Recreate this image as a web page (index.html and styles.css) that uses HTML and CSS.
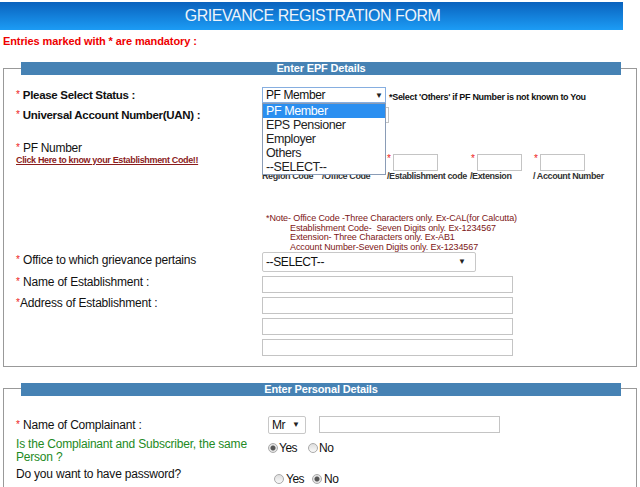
FILE: index.html
```html
<!DOCTYPE html>
<html>
<head>
<meta name="viewport" content="width=device-width, initial-scale=1">
<link rel="stylesheet" href="styles.css">
</head>
<body>
  <div class="page-title">GRIEVANCE REGISTRATION FORM</div>
  <p class="mandatory">Entries marked with * are mandatory :</p>

  <!-- EPF details -->
  <div class="panel">
    <div class="panel-title">Enter EPF Details</div>

    <div class="row row-status">
      <div class="label strong"><span class="req">*</span> Please Select Status :</div>
      <div class="field">
        <div class="select select-status">
          <span>PF Member</span><span class="arrow">&#9660;</span>
          <ul class="options">
            <li class="active">PF Member</li>
            <li>EPS Pensioner</li>
            <li>Employer</li>
            <li>Others</li>
            <li>--SELECT--</li>
          </ul>
        </div>
        <span class="hint">*Select 'Others' if PF Number is not known to You</span>
      </div>
    </div>

    <div class="row row-uan">
      <div class="label strong"><span class="req">*</span> Universal Account Number(UAN) :</div>
      <div class="field">
        <div class="input input-uan"></div>
      </div>
    </div>

    <div class="row row-pf">
      <div class="label">
        <div class="pf-title"><span class="req">*</span> PF Number</div>
        <a href="#" class="code-link">Click Here to know your Establishment Code!!</a>
      </div>
      <div class="pf-grid">
        <div class="pf-part">
          <div class="pf-box"><span class="req"></span><span class="input input-code"></span></div>
          <div class="pf-caption">Region Code</div>
        </div>
        <div class="pf-part">
          <div class="pf-box"><span class="req"></span><span class="input input-code"></span></div>
          <div class="pf-caption">/Office Code</div>
        </div>
        <div class="pf-part">
          <div class="pf-box"><span class="req">*</span><span class="input input-code"></span></div>
          <div class="pf-caption">/Establishment code</div>
        </div>
        <div class="pf-part">
          <div class="pf-box"><span class="req">*</span><span class="input input-code"></span></div>
          <div class="pf-caption">/Extension</div>
        </div>
        <div class="pf-part">
          <div class="pf-box"><span class="req">*</span><span class="input input-code"></span></div>
          <div class="pf-caption">/ Account Number</div>
        </div>
      </div>
    </div>

    <div class="note">
      <div>*Note- Office Code -Three Characters only. Ex-CAL(for Calcutta)</div>
      <div class="indent">Establishment Code-&nbsp; Seven Digits only. Ex-1234567</div>
      <div class="indent">Extension- Three Characters only. Ex-AB1</div>
      <div class="indent">Account Number-Seven Digits only. Ex-1234567</div>
    </div>

    <div class="row row-office">
      <div class="label"><span class="req">*</span> Office to which grievance pertains</div>
      <div class="field">
        <div class="select select-office"><span>--SELECT--</span><span class="arrow">&#9660;</span></div>
      </div>
    </div>

    <div class="row row-text">
      <div class="label"><span class="req">*</span> Name of Establishment :</div>
      <div class="field">
        <div class="input input-wide"></div>
      </div>
    </div>

    <div class="row row-text">
      <div class="label"><span class="req">*</span>Address of Establishment :</div>
      <div class="field stack">
        <div class="input input-wide"></div>
        <div class="input input-wide"></div>
        <div class="input input-wide"></div>
      </div>
    </div>
  </div>

  <!-- personal details -->
  <div class="panel panel-personal">
    <div class="panel-title">Enter Personal Details</div>

    <div class="row row-complainant">
      <div class="label"><span class="req">*</span> Name of Complainant :</div>
      <div class="field">
        <div class="select select-title"><span>Mr</span><span class="arrow">&#9660;</span></div>
        <div class="input input-name"></div>
      </div>
    </div>

    <div class="row row-question">
      <div class="label green">Is the Complainant and Subscriber, the same<br>Person ?</div>
      <div class="radios">
        <span class="radio checked"></span><span class="radio-text">Yes</span>
        <span class="radio"></span><span class="radio-text">No</span>
      </div>
    </div>

    <div class="row row-password">
      <div class="label">Do you want to have password?</div>
      <div class="radios radios-wide">
        <span class="radio"></span><span class="radio-text">Yes</span>
        <span class="radio checked"></span><span class="radio-text">No</span>
      </div>
    </div>
  </div>
</body>
</html>
```

FILE: styles.css
```css
* {
  box-sizing: border-box;
}

body {
  margin: 0;
  font-family: "Liberation Sans", Arial, sans-serif;
  color: #111;
  background: #fff;
}

/* Top banner */
.page-title {
  margin: 2px 17px 0 0;
  height: 28px;
  line-height: 28px;
  padding-left: 2px;
  text-align: center;
  font-size: 16px;
  letter-spacing: -0.45px;
  color: #eef4fa;
  background: linear-gradient(#0a62bd, #1c9cf5);
}

.mandatory {
  margin: 0;
  padding: 4px 0 0 3px;
  font-size: 11px;
  line-height: 14px;
  letter-spacing: -0.1px;
  font-weight: bold;
  color: #e00;
}

/* Bordered groups with a blue caption bar */
.panel {
  margin: 20px 3px 0 3px;
  border: 1px solid #999;
  padding: 0 0 10px 12px;
}

.panel-personal {
  margin-top: 21px;
  padding-bottom: 40px;
}

.panel-title {
  margin: -7px 15px 0 5px;
  height: 13px;
  line-height: 13px;
  font-size: 11px;
  letter-spacing: -0.15px;
  font-weight: bold;
  text-align: center;
  color: #fff;
  background: #4682b4;
}

.panel-personal .panel-title {
  margin-top: -6px;
}

.row {
  display: flex;
  align-items: center;
}

.label {
  width: 246px;
  flex-shrink: 0;
  font-size: 12px;
  line-height: 14px;
  letter-spacing: -0.2px;
}

.label.strong {
  font-size: 11.5px;
  letter-spacing: -0.3px;
  font-weight: bold;
}

.label.green {
  color: #238a23;
  line-height: 13px;
}

.req {
  color: #e22;
  font-size: 10px;
  vertical-align: top;
  font-weight: normal;
  letter-spacing: 0;
}

.field {
  display: flex;
  align-items: center;
}

.field.stack {
  flex-direction: column;
  gap: 4px;
}

/* Form controls */
.input {
  display: block;
  height: 17px;
  border: 1px solid #c4c4c4;
  background: #fff;
}

.select {
  position: relative;
  display: flex;
  align-items: center;
  justify-content: space-between;
  padding: 0 4px 0 3px;
  font-size: 12px;
  letter-spacing: -0.4px;
  border: 1px solid #c8c8c8;
  border-radius: 2px;
  background: #fff;
}

.arrow {
  font-size: 8px;
  letter-spacing: 0;
  color: #222;
}

.row-status {
  margin-top: 12px;
}

.select-status {
  width: 124px;
  height: 16px;
  padding-right: 2px;
  border-color: #86aee0;
  border-radius: 0;
}

.options {
  position: absolute;
  top: 15px;
  left: -1px;
  width: 124px;
  margin: 0;
  padding: 0;
  list-style: none;
  border: 1px solid #8a9cb6;
  background: #fff;
  z-index: 2;
}

.options li {
  height: 14px;
  line-height: 14px;
  padding-left: 3px;
  font-size: 12.5px;
  letter-spacing: -0.4px;
  color: #222;
}

.options li.active {
  color: #fff;
  background: #2b8ff0;
}

.hint {
  margin: 3px 0 0 3px;
  font-size: 9px;
  letter-spacing: -0.3px;
  font-weight: bold;
}

.row-uan {
  margin-top: 4px;
}

.input-uan {
  width: 127px;
  height: 16px;
}

/* PF number parts */
.row-pf {
  margin-top: 18px;
  align-items: flex-start;
}

.pf-title {
  letter-spacing: -0.3px;
}

.code-link {
  display: block;
  font-size: 9px;
  line-height: 10px;
  letter-spacing: -0.35px;
  font-weight: bold;
  color: #8b1c1c;
}

.pf-grid {
  display: grid;
  grid-template-columns: 60px 65px 83px 63px auto;
  padding-top: 13px;
}

.pf-box {
  display: flex;
  align-items: flex-start;
}

.pf-box .req {
  width: 6px;
  line-height: 10px;
}

.pf-part:nth-child(4) .pf-box,
.pf-part:nth-child(5) .pf-box {
  padding-left: 1px;
}

.input-code {
  width: 45px;
}

.pf-caption {
  font-size: 9px;
  line-height: 10px;
  letter-spacing: -0.4px;
  font-weight: bold;
  white-space: nowrap;
  color: #333;
}

.note {
  margin: 33px 0 0 250px;
  font-size: 9px;
  line-height: 9.7px;
  letter-spacing: -0.1px;
  color: #7d1616;
}

.note .indent {
  padding-left: 24px;
}

.row-office {
  margin-top: -1px;
}

.row-office .label {
  padding-bottom: 3px;
}

.select-office {
  width: 214px;
  height: 20px;
  padding-right: 9px;
}

.row-text {
  margin-top: 4px;
  align-items: flex-start;
}

.row-text .label {
  line-height: 12px;
}

.input-wide {
  width: 251px;
}

/* Personal details */
.row-complainant {
  margin-top: 20px;
}

.select-title {
  width: 38px;
  height: 18px;
  margin-left: 6px;
  padding-right: 5px;
}

.input-name {
  width: 181px;
  margin-left: 13px;
}

.row-question {
  margin-top: 4px;
  align-items: flex-start;
}

.radios {
  display: flex;
  align-items: center;
  padding: 3px 0 0 6px;
  font-size: 12px;
  letter-spacing: -0.5px;
}

.radio {
  width: 10px;
  height: 10px;
  margin-right: 1px;
  border: 1px solid #aaa;
  border-radius: 50%;
  background: linear-gradient(#ddd, #fafafa);
}

.radio.checked {
  background: radial-gradient(circle, #555 0 2px, #e4e4e4 3px);
}

.radio-text {
  margin-right: 11px;
}

.row-password {
  margin-top: 3px;
  align-items: flex-start;
}

.radios-wide {
  padding: 5px 0 0 12px;
}

.radios-wide .radio {
  margin-right: 2px;
}

.radios-wide .radio-text {
  margin-right: 8px;
}
```
